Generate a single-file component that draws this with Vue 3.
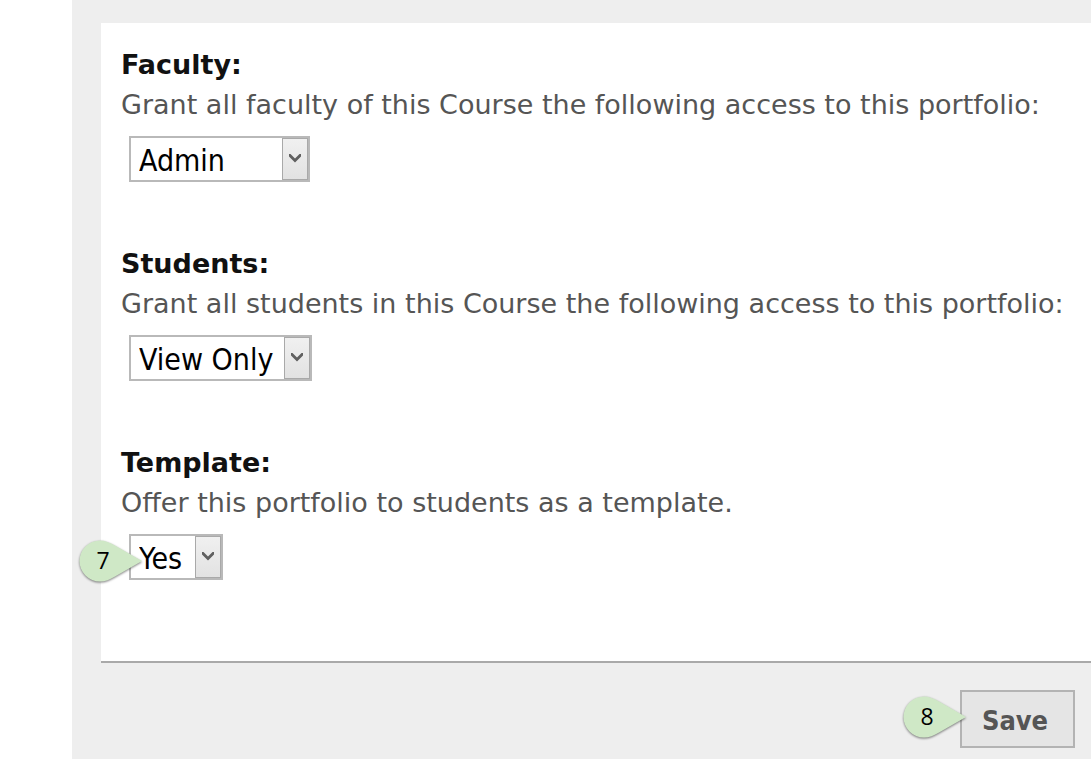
<script setup>
import { reactive } from 'vue'

const fields = reactive([
  {
    id: 'faculty',
    title: 'Faculty:',
    text: 'Grant all faculty of this Course the following access to this portfolio:',
    value: 'Admin',
    options: ['Admin', 'View Only'],
  },
  {
    id: 'students',
    title: 'Students:',
    text: 'Grant all students in this Course the following access to this portfolio:',
    value: 'View Only',
    options: ['Admin', 'View Only'],
  },
  {
    id: 'template',
    title: 'Template:',
    text: 'Offer this portfolio to students as a template.',
    value: 'Yes',
    options: ['Yes', 'No'],
    step: '7',
  },
])
</script>

<template>
  <main class="page">
    <form class="shell" @submit.prevent>
      <div class="panel">
        <section v-for="f in fields" :key="f.id" class="field">
          <h2 class="title">{{ f.title }}</h2>
          <label :for="f.id" class="text">{{ f.text }}</label>
          <div class="control" :class="f.id">
            <select :id="f.id" v-model="f.value" class="select">
              <option v-for="o in f.options" :key="o">{{ o }}</option>
            </select>
            <span class="arrow" aria-hidden="true">
              <svg width="12" height="10" viewBox="0 0 12 10">
                <path d="M0 1V3.5L6 9.5L12 3.5V1H10.5L6 5.5L1.5 1Z" fill="#606060" />
              </svg>
            </span>
            <span v-if="f.step" class="callout">
              <svg class="drop" width="66" height="44" viewBox="0 0 66 44" aria-hidden="true">
                <path d="M64 22L37 6.5C32 3.5 27 1.5 22 1.5A20.5 20.5 0 0 0 22 42.5C27 42.5 32 40.5 37 37.5Z" />
              </svg>
              <span class="number">{{ f.step }}</span>
            </span>
          </div>
        </section>
      </div>
      <div class="actions">
        <div class="save-wrap">
          <button type="submit" class="save">Save</button>
          <span class="callout">
            <svg class="drop" width="66" height="44" viewBox="0 0 66 44" aria-hidden="true">
              <path d="M64 22L37 6.5C32 3.5 27 1.5 22 1.5A20.5 20.5 0 0 0 22 42.5C27 42.5 32 40.5 37 37.5Z" />
            </svg>
            <span class="number">8</span>
          </span>
        </div>
      </div>
    </form>
  </main>
</template>

<style>
body {
  background: #fff;
}
</style>

<style scoped>
.page {
  min-height: 100vh;
  display: flex;
  padding-left: 72px;
  box-sizing: border-box;
  overflow: hidden;
  font-family: Verdana, "DejaVu Sans", sans-serif;
}
.shell {
  flex: 1;
  min-width: 0;
  padding: 23px 0 0 29px;
  background: #eee;
}
.panel {
  padding: 22px 0 19px 20px;
  background: #fff;
  border-bottom: 2px solid #a9a9a9;
}
.field {
  padding-bottom: 62px;
}
.title,
.text {
  display: block;
  margin: 0;
  font-size: 27px;
  line-height: 40px;
  white-space: nowrap;
}
.title {
  font-weight: bold;
  color: #111;
}
.text {
  color: #555;
}
.control {
  position: relative;
  width: 181px;
  height: 46px;
  margin: 11px 0 0 8px;
}
.control.students {
  width: 183px;
}
.control.template {
  width: 94px;
}
.select {
  appearance: none;
  display: block;
  width: 100%;
  height: 100%;
  box-sizing: border-box;
  margin: 0;
  padding: 2px 0 0 8px;
  border: 2px solid #b9b9b9;
  border-radius: 0;
  background: #fff;
  color: #000;
  font-family: Tahoma, "DejaVu Sans Condensed", "DejaVu Sans", sans-serif;
  font-size: 30px;
}
.arrow {
  position: absolute;
  top: 2px;
  right: 2px;
  bottom: 2px;
  width: 26px;
  box-sizing: border-box;
  display: flex;
  align-items: center;
  justify-content: center;
  padding-bottom: 2px;
  border: 1px solid #a9a9a9;
  background: linear-gradient(#f0f0f0, #e2e2e2);
  pointer-events: none;
}
.callout {
  position: absolute;
  left: -51px;
  top: 5px;
  width: 66px;
  height: 44px;
  pointer-events: none;
}
.drop {
  display: block;
  overflow: visible;
  fill: #cfe8c6;
  filter: drop-shadow(0 1px 1px rgba(0, 0, 0, 0.5));
}
.number {
  position: absolute;
  left: 0;
  top: 0;
  width: 50px;
  line-height: 42px;
  text-align: center;
  font-family: "Open Sans", "Noto Sans", sans-serif;
  font-size: 23px;
  color: #000;
}
.actions {
  display: flex;
  justify-content: flex-end;
  padding: 27px 16px 11px;
}
.save-wrap {
  position: relative;
}
.save-wrap .callout {
  left: -58px;
}
.save {
  display: block;
  width: 115px;
  height: 58px;
  padding: 2px 5px 0 0;
  border: 2px solid #b3b3b3;
  border-radius: 0;
  background: #e5e5e5;
  color: #555;
  font-family: Tahoma, "DejaVu Sans Condensed", "DejaVu Sans", sans-serif;
  font-size: 27px;
  font-weight: bold;
}
</style>
